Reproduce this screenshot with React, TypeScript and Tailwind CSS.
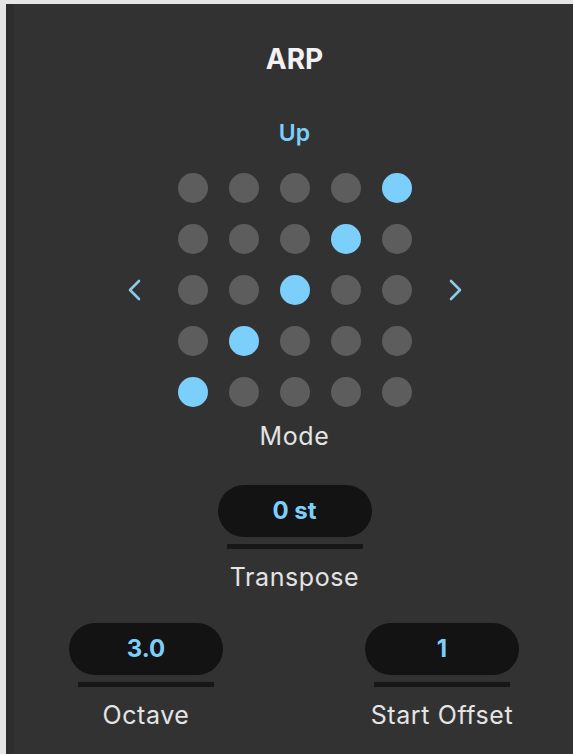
import React from 'react';

// Arpeggiator panel: mode matrix plus three value pills

const FONT = "font-['Inter','Liberation_Sans',sans-serif]";

// which dot is lit in each row (top to bottom) for the "Up" pattern
const UP_PATTERN = [4, 3, 2, 1, 0];

const Chevron: React.FC<{ dir: 'left' | 'right' }> = ({ dir }) => (
  <svg width="16" height="24" viewBox="0 0 16 24" fill="none">
    <polyline
      points={dir === 'left' ? '13,3 4,12 13,21' : '3,3 12,12 3,21'}
      stroke="#8ccbe8"
      strokeWidth="2.6"
      strokeLinecap="round"
      strokeLinejoin="round"
    />
  </svg>
);

const ModeGrid: React.FC = () => (
  <div className="grid grid-cols-5 gap-[21px]">
    {UP_PATTERN.map((lit, row) =>
      [0, 1, 2, 3, 4].map((col) => (
        <div
          key={`${row}-${col}`}
          className={`h-[30px] w-[30px] rounded-full ${
            col === lit ? 'bg-[#7dcffb]' : 'bg-[#5d5d5d]'
          }`}
        />
      ))
    )}
  </div>
);

const ValuePill: React.FC<{ value: string; label: string }> = ({ value, label }) => (
  <div className="flex w-[154px] flex-col items-center">
    <div className="flex h-[52px] w-[154px] items-center justify-center rounded-full bg-[#131313]">
      <span className="text-[24px] leading-none font-bold text-[#7dcffb]">{value}</span>
    </div>
    <div className="mt-[7px] h-[5px] w-[136px] bg-[#171717]" />
    <span className="mt-[16px] text-[25px] leading-none tracking-[0.6px] whitespace-nowrap text-[#e4e4e4]">
      {label}
    </span>
  </div>
);

export default function App() {
  return (
    <div className="h-[754px] w-[573px] overflow-hidden bg-[#e6e6e6] pt-[4px] pl-[6px]">
      <div className={`${FONT} flex h-full w-[577px] flex-col items-center bg-[#323232] shadow-[inset_8px_0_0_#2d2d2d]`}>
        <h1 className="mt-[41px] text-[28px] leading-none font-bold text-[#f2f2f2]">ARP</h1>

        <span className="mt-[49px] text-[23px] leading-none font-semibold text-[#7dcffb]">Up</span>

        <div className="mt-[28px] flex items-center gap-[36px]">
          <Chevron dir="left" />
          <ModeGrid />
          <Chevron dir="right" />
        </div>

        <span className="mt-[17px] text-[25px] leading-none tracking-[0.6px] text-[#e4e4e4]">Mode</span>

        <div className="mt-[36px]">
          <ValuePill value="0 st" label="Transpose" />
        </div>

        <div className="mt-[33px] flex w-full justify-between pr-[64px] pl-[63px]">
          <ValuePill value="3.0" label="Octave" />
          <ValuePill value="1" label="Start Offset" />
        </div>
      </div>
    </div>
  );
}
